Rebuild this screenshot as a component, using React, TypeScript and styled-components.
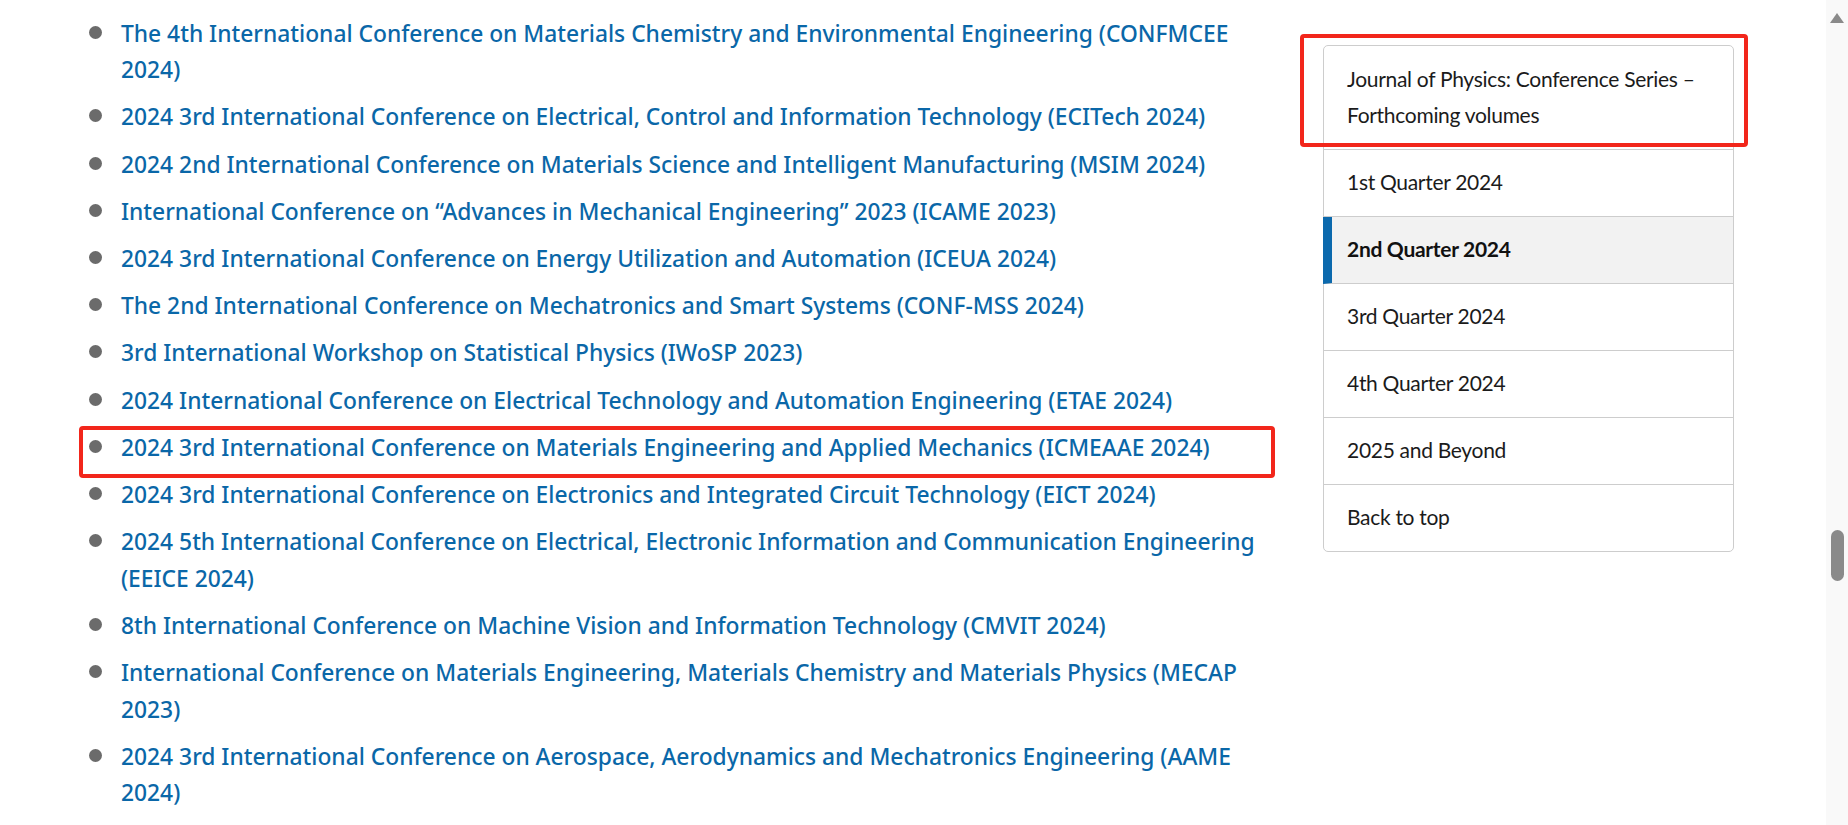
import React from "react";
import styled, { createGlobalStyle, css } from "styled-components";

const GlobalStyle = createGlobalStyle`
  html, body {
    margin: 0;
    padding: 0;
    background: #ffffff;
    overflow: hidden;
  }
  body {
    font-family: "Noto Sans", Lato, "Liberation Sans", sans-serif;
  }
  * { box-sizing: border-box; }
`;

const Page = styled.div`
  display: flex;
  width: 1848px;
  height: 825px;
  background: #ffffff;
`;

const Main = styled.main`
  flex: 1;
  display: flex;
  align-items: flex-start;
  gap: 45px;
  padding-left: 88px;
`;

const ConferenceList = styled.ul`
  list-style: none;
  margin: 0;
  padding: 15.75px 0 0 0;
  flex: 0 0 1190px;
  width: 1190px;
`;

const Marker = css`
  &::after {
    content: "";
    position: absolute;
    left: -9px;
    right: 3.5px;
    top: -4px;
    bottom: -12px;
    border: 4px solid #f2261b;
    border-radius: 4px;
    pointer-events: none;
  }
`;

const ConferenceItem = styled.li<{ $marked?: boolean }>`
  position: relative;
  padding-left: 33px;
  margin-bottom: 10.7px;
  font-family: "Noto Sans", "Open Sans", sans-serif;
  font-size: 22.8px;
  line-height: 36.5px;
  font-weight: 500;
  color: #0a67a8;
  &::before {
    content: "";
    position: absolute;
    left: 1px;
    top: 10px;
    width: 13px;
    height: 13px;
    border-radius: 50%;
    background: #6b6b6b;
  }
  ${(p) => p.$marked && Marker}
`;

const ConferenceLink = styled.a`
  color: inherit;
  text-decoration: none;
`;

const Sidebar = styled.nav`
  flex: 0 0 411px;
  width: 411px;
  margin-top: 45px;
  border: 1px solid #cdcdcd;
  border-radius: 5px;
  background: #ffffff;
`;

const SideRow = styled.div<{ $active?: boolean; $header?: boolean }>`
  position: relative;
  padding: 14.75px 23px;
  font-family: Lato, "Noto Sans", sans-serif;
  font-size: 21px;
  letter-spacing: -0.3px;
  line-height: 36.5px;
  color: #1b1b1b;
  border-bottom: 1px solid #cdcdcd;
  &:last-child {
    border-bottom: none;
  }
  ${(p) =>
    p.$active &&
    css`
      margin-left: -1px;
      border-left: 9px solid #0b69ad;
      padding-left: 15px;
      background: #f2f2f2;
      font-weight: 700;
      color: #111111;
    `}
  ${(p) =>
    p.$header &&
    css`
      &::after {
        content: "";
        position: absolute;
        left: -24px;
        right: -15px;
        top: -12px;
        bottom: 2px;
        border: 4px solid #f2261b;
        border-radius: 4px;
        pointer-events: none;
      }
    `}
`;

const ScrollTrack = styled.div`
  flex: 0 0 22px;
  width: 22px;
  background: #f9f9f9;
  display: flex;
  flex-direction: column;
  align-items: center;
`;

const ArrowUp = styled.div`
  margin-top: 13px;
  width: 0;
  height: 0;
  border-left: 7.5px solid transparent;
  border-right: 7.5px solid transparent;
  border-bottom: 10px solid #8a8a8a;
`;

const Thumb = styled.div`
  margin-top: 507px;
  width: 13px;
  height: 51px;
  border-radius: 6.5px;
  background: #8a8a8a;
`;

const conferences: { title: string; marked?: boolean }[] = [
  { title: "The 4th International Conference on Materials Chemistry and Environmental Engineering (CONFMCEE 2024)" },
  { title: "2024 3rd International Conference on Electrical, Control and Information Technology (ECITech 2024)" },
  { title: "2024 2nd International Conference on Materials Science and Intelligent Manufacturing (MSIM 2024)" },
  { title: "International Conference on \u201cAdvances in Mechanical Engineering\u201d 2023 (ICAME 2023)" },
  { title: "2024 3rd International Conference on Energy Utilization and Automation (ICEUA 2024)" },
  { title: "The 2nd International Conference on Mechatronics and Smart Systems (CONF-MSS 2024)" },
  { title: "3rd International Workshop on Statistical Physics (IWoSP 2023)" },
  { title: "2024 International Conference on Electrical Technology and Automation Engineering (ETAE 2024)" },
  { title: "2024 3rd International Conference on Materials Engineering and Applied Mechanics (ICMEAAE 2024)", marked: true },
  { title: "2024 3rd International Conference on Electronics and Integrated Circuit Technology (EICT 2024)" },
  { title: "2024 5th International Conference on Electrical, Electronic Information and Communication Engineering (EEICE 2024)" },
  { title: "8th International Conference on Machine Vision and Information Technology (CMVIT 2024)" },
  { title: "International Conference on Materials Engineering, Materials Chemistry and Materials Physics (MECAP 2023)" },
  { title: "2024 3rd International Conference on Aerospace, Aerodynamics and Mechatronics Engineering (AAME 2024)" },
];

const sections = [
  { label: "1st Quarter 2024" },
  { label: "2nd Quarter 2024", active: true },
  { label: "3rd Quarter 2024" },
  { label: "4th Quarter 2024" },
  { label: "2025 and Beyond" },
  { label: "Back to top" },
];

export default function App() {
  return (
    <>
      <GlobalStyle />
      <Page>
        <Main>
          <ConferenceList>
            {conferences.map((c) => (
              <ConferenceItem key={c.title} $marked={c.marked}>
                <ConferenceLink href="#">{c.title}</ConferenceLink>
              </ConferenceItem>
            ))}
          </ConferenceList>
          <Sidebar>
            <SideRow $header>Journal of Physics: Conference Series – Forthcoming volumes</SideRow>
            {sections.map((s) => (
              <SideRow key={s.label} $active={s.active}>
                {s.label}
              </SideRow>
            ))}
          </Sidebar>
        </Main>
        <ScrollTrack>
          <ArrowUp />
          <Thumb />
        </ScrollTrack>
      </Page>
    </>
  );
}
